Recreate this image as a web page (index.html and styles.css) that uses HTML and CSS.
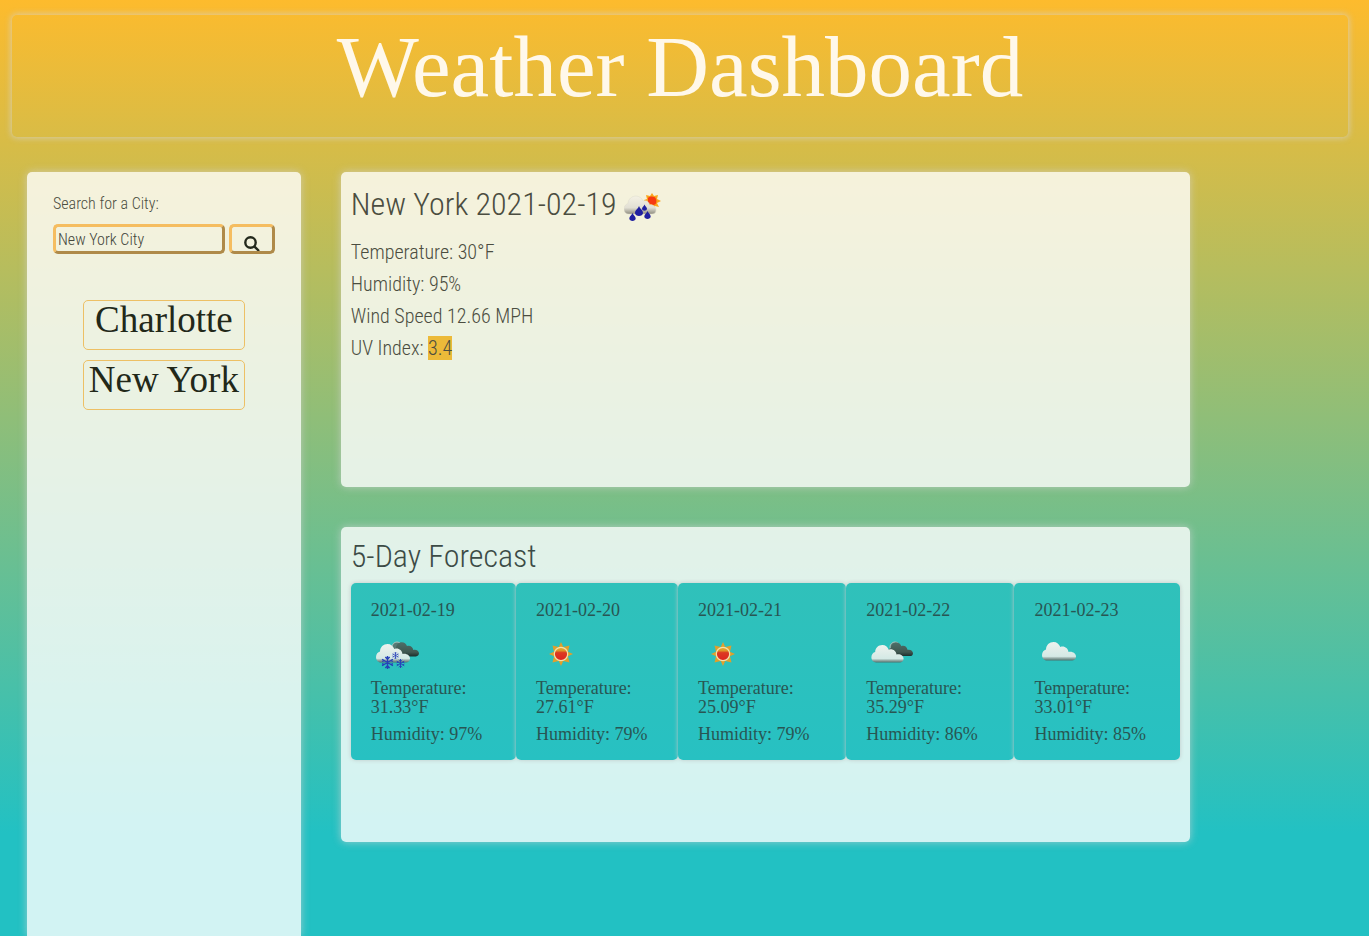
FILE: index.html
```html
<!DOCTYPE html>
<html lang="en">
<head>
<meta charset="utf-8">
<title>Weather Dashboard</title>
<link rel="stylesheet" href="styles.css">
</head>
<body>
<svg class="defs" aria-hidden="true">
  <defs>
    <linearGradient id="white" x1="0" y1="0" x2="0" y2="1">
      <stop offset="0" stop-color="#eef2ee"/><stop offset=".78" stop-color="#d4e9e5"/><stop offset=".86" stop-color="#a0b5b0"/><stop offset="1" stop-color="#4e6f6b"/>
    </linearGradient>
    <linearGradient id="pale" x1="0" y1="0" x2="0" y2="1">
      <stop offset="0" stop-color="#f4f1e4"/><stop offset=".65" stop-color="#e2e0d4"/><stop offset="1" stop-color="#8f8d80"/>
    </linearGradient>
    <linearGradient id="dark" x1="0" y1="0" x2="0" y2="1">
      <stop offset="0" stop-color="#4d6f69"/><stop offset=".7" stop-color="#405750"/><stop offset="1" stop-color="#1c2f2d"/>
    </linearGradient>
    <linearGradient id="core" x1="0" y1="0" x2="0" y2="1">
      <stop offset="0" stop-color="#e5ad2c"/><stop offset=".25" stop-color="#df9526"/><stop offset=".4" stop-color="#dc3a22"/><stop offset="1" stop-color="#dd2420"/>
    </linearGradient>
  </defs>
  <symbol id="cloud" viewBox="0 0 34 19">
    <path d="M5 18.500C2 18.500 0 16 0 13C0 10 2 8 4 7.500C4 3 7.500 0 11.500 0C15 0 17 2 18.300 5C22 3.500 26 6 26.500 10C30.500 9 34 11.500 34 14.500C34 17 32 18.500 30 18.500Z"/>
  </symbol>
  <symbol id="flake" viewBox="0 0 12 12">
    <path d="M6 0V12M1 3L11 9M1 9L11 3M4 1L6 3L8 1M4 11L6 9L8 11M1 5L3 4M9 8L11 7M1 7L3 8M9 4L11 5" fill="none" stroke="#2741b9" stroke-width="1.300"/>
  </symbol>
  <symbol id="sun" viewBox="0 0 24 24">
    <path d="M12 0L14.300 5L20.500 3.500L19 9.700L24 12L19 14.300L20.500 20.500L14.300 19L12 24L9.700 19L3.500 20.500L5 14.300L0 12L5 9.700L3.500 3.500L9.700 5Z" fill="#dfa02d"/>
    <circle cx="12" cy="12" r="6.700" fill="url(#core)" stroke="#f1e2ae" stroke-width="1.200"/>
  </symbol>
  <symbol id="drop" viewBox="0 0 8 10">
    <path d="M4 0C5 3 8 4 8 7C8 9 6 10 4 10C2 10 0 9 0 7C0 4 3 3 4 0Z" fill="#2020a0"/>
  </symbol>
</svg>

<header class="banner"><h1>Weather Dashboard</h1></header>

<div class="layout">
  <aside class="panel sidebar">
    <form class="search">
      <label for="city">Search for a City:</label>
      <div class="search-row">
        <input id="city" type="text" value="New York City">
        <button type="button" class="search-button" aria-label="Search">
          <svg viewBox="0 0 16 16"><circle cx="6.500" cy="6.500" r="5.200"/><path d="M10.300 10.300L15 15"/></svg>
        </button>
      </div>
    </form>
    <div class="history">
      <button type="button">Charlotte</button>
      <button type="button">New York</button>
    </div>
  </aside>

  <main class="content">
    <section class="panel current">
      <h2>New York 2021-02-19
        <svg class="today-icon" viewBox="0 0 37 28">
          <path d="M28 0L30 3L34 2L33 6L37 8L33 10L35 14L31 13L28 16L22 12L20 7L23 6L22 2L26 3Z" fill="#fba51c"/>
          <path d="M24 5C26 3 31 3 32 6C33 9 32 12 29 12L24 10Z" fill="#f63a12"/>
          <path d="M5 21C2 21 0 19 0 16C0 13 2 11 4 10.500C4 6 8 3 12 3C15 3 18 5 19 8C22 7 25 8 25.500 12C29 11 32 14 32 17C32 20 30 21 28 21Z" fill="url(#pale)" stroke="#dcdacb" stroke-width=".5"/>
          <use href="#drop" x="11" y="13" width="8" height="10"/>
          <use href="#drop" x="18" y="11" width="5" height="7"/>
          <use href="#drop" x="20" y="18" width="7" height="8"/>
          <use href="#drop" x="5" y="20" width="7" height="8"/>
        </svg>
      </h2>
      <p>Temperature: 30°F</p>
      <p>Humidity: 95%</p>
      <p>Wind Speed 12.66 MPH</p>
      <p>UV Index: <span class="uv">3.4</span></p>
    </section>

    <section class="panel forecast">
      <h2>5-Day Forecast</h2>
      <div class="cards">
        <article class="card">
          <h3>2021-02-19</h3>
          <svg class="icon" viewBox="0 0 50 50">
            <circle cx="26" cy="18" r="5" fill="#587a75" stroke="#a9c6c1"/>
            <use href="#cloud" x="22" y="13" width="26" height="15" fill="url(#dark)"/>
            <use href="#cloud" x="5" y="15" width="34" height="19" fill="url(#white)"/>
            <use href="#flake" x="10" y="27" width="13" height="13"/>
            <use href="#flake" x="21" y="23" width="7" height="7"/>
            <use href="#flake" x="25" y="30" width="9" height="9"/>
          </svg>
          <p>Temperature: 31.33°F</p><p>Humidity: 97%</p>
        </article>
        <article class="card">
          <h3>2021-02-20</h3>
          <svg class="icon" viewBox="0 0 50 50"><use href="#sun" x="13" y="13" width="24" height="24"/></svg>
          <p>Temperature: 27.61°F</p><p>Humidity: 79%</p>
        </article>
        <article class="card">
          <h3>2021-02-21</h3>
          <svg class="icon" viewBox="0 0 50 50"><use href="#sun" x="13" y="13" width="24" height="24"/></svg>
          <p>Temperature: 25.09°F</p><p>Humidity: 79%</p>
        </article>
        <article class="card">
          <h3>2021-02-22</h3>
          <svg class="icon" viewBox="0 0 50 50">
            <circle cx="29" cy="18" r="5" fill="#587a75" stroke="#a9c6c1"/>
            <use href="#cloud" x="22" y="13" width="25" height="15" fill="url(#dark)"/>
            <use href="#cloud" x="5" y="16" width="33" height="18" fill="url(#white)"/>
          </svg>
          <p>Temperature: 35.29°F</p><p>Humidity: 86%</p>
        </article>
        <article class="card">
          <h3>2021-02-23</h3>
          <svg class="icon" viewBox="0 0 50 50"><use href="#cloud" x="8" y="13" width="34" height="19" fill="url(#white)"/></svg>
          <p>Temperature: 33.01°F</p><p>Humidity: 85%</p>
        </article>
      </div>
    </section>
  </main>
</div>
</body>
</html>
```
FILE: styles.css
```css
* { box-sizing: border-box; }

body {
  margin: 0;
  min-height: 100vh;
  display: flex;
  flex-direction: column;
  background: linear-gradient(180deg, #fdbb2d 0%, #22c1c3 89%) fixed;
  font-family: "Roboto Condensed", "Liberation Sans Narrow", Roboto, sans-serif;
  font-weight: 300;
  color: #4b4d40;
}

h1, h2, h3, p { margin: 0; font-weight: 300; }

.defs { position: absolute; width: 0; height: 0; }

.banner {
  margin: 15px 21px 0 12px;
  padding: 2px 0 20px;
  border-radius: 5px;
  box-shadow: 0 0 6px 1px #d3d3d3b0;
  text-align: center;
}

.banner h1 {
  font-family: "Liberation Serif", serif;
  font-size: 87px;
  line-height: 100px;
  font-weight: 400;
  color: #fff8ea;
}

.layout {
  flex: 1;
  display: flex;
  gap: 40px;
  padding: 35px 0 0 27px;
}

.panel {
  border-radius: 5px;
  background: #ffffffcc;
  box-shadow: 0 0 8px #d3d3d3b0;
}

.sidebar {
  flex: none;
  width: 20vw;
  min-width: 273px;
  padding: 20px 26px 0;
  border-radius: 5px 5px 0 0;
}

.search label {
  display: block;
  font-size: 16px;
  line-height: 24px;
}

.search-row {
  display: flex;
  align-items: center;
  gap: 4px;
  margin-top: 8px;
}

.search input {
  flex: 1;
  width: 100%;
  min-width: 0;
  height: 30px;
  padding: 1px 2px;
  border: 3px solid;
  border-color: #f5bd60 #af8a49 #af8a49 #f5bd60;
  border-radius: 5px;
  background: transparent;
  font: inherit;
  font-size: 16px;
  color: #44463a;
}

.search-button {
  display: flex;
  flex: none;
  justify-content: center;
  width: 46px;
  height: 30px;
  padding: 9px 0 0;
  border: 3px solid;
  border-color: #f5bd60 #af8a49 #af8a49 #f5bd60;
  border-radius: 5px;
  background: transparent;
  overflow: hidden;
}

.search-button svg {
  flex: none;
  width: 16px;
  height: 16px;
  fill: none;
  stroke: #23291c;
  stroke-width: 2.4;
}

.history {
  display: flex;
  flex-direction: column;
  gap: 10px;
  margin: 46px 30px 0;
}

.history button {
  display: flex;
  justify-content: center;
  height: 50px;
  padding: 0;
  border: 1px solid #edc065;
  border-radius: 5px;
  background: transparent;
  font-family: "Liberation Serif", serif;
  font-size: 37px;
  line-height: 38px;
  white-space: nowrap;
  color: #222819;
}

.content {
  flex: 0 1 62vw;
  display: flex;
  flex-direction: column;
  gap: 40px;
}

.content .panel { min-height: 315px; padding: 10px; }

.content h2 { font-size: 32px; line-height: 38px; }

.current { font-size: 20px; }
.current h2 { padding-top: 3px; margin-bottom: 17px; }
.current p { line-height: 24px; margin-bottom: 8px; }

.today-icon { width: 37px; height: 28px; vertical-align: -6px; }

.uv { display: inline-block; background: #ecba39; }

.forecast h2 { margin-bottom: 8px; color: #3c4b46; }

.cards {
  display: grid;
  grid-template-columns: 165fr 162fr 168fr 168fr 165fr;
}

.card {
  padding: 18px 10px 16px 20px;
  border-radius: 5px;
  background: linear-gradient(#30c1ba, #27c1c2);
  box-shadow: 0 0 4px #c0c8c8;
  font-family: "Liberation Serif", serif;
  font-size: 18px;
  line-height: 19px;
  color: #285653;
}

.card h3 { font-size: 18px; font-weight: 400; }
.card p { font-weight: 400; max-width: 125px; }
.card p + p { margin-top: 8px; }

.icon { display: block; width: 50px; height: 50px; margin: 9px 0 0; }
```
